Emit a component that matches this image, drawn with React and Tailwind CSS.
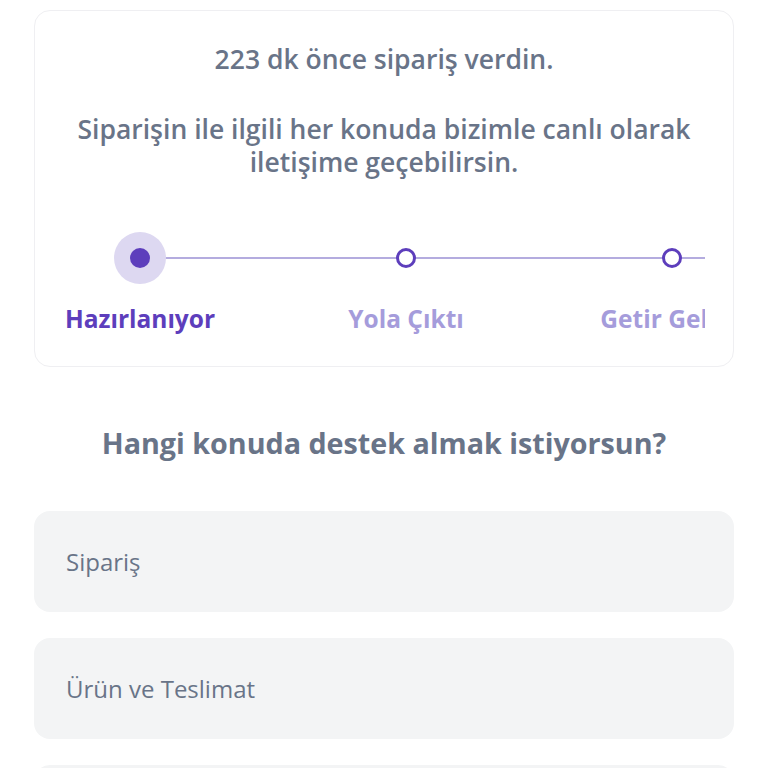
import React from "react";

const steps = [
  { label: "Hazırlanıyor", active: true },
  { label: "Yola Çıktı", active: false },
  { label: "Getir Gelsin", active: false },
];

export default function App() {
  return (
    <div
      className="w-[768px] h-[768px] overflow-hidden bg-white px-[34px] pt-[10px]"
      style={{ fontFamily: '"Open Sans", "Noto Sans", sans-serif' }}
    >
      <div className="rounded-[16px] border border-[#efeff2] bg-white pt-[32px] pb-[31px] text-[#697488]">
        <p className="text-center text-[26.5px] font-semibold leading-[33px]">223 dk önce sipariş verdin.</p>
        <p className="mt-[37px] text-center text-[26.5px] font-semibold leading-[33px] px-[30px]">
          Siparişin ile ilgili her konuda bizimle canlı olarak iletişime geçebilirsin.
        </p>
        <div className="relative ml-[30px] mr-[28px] mt-[53px] overflow-hidden">
          <div className="absolute left-[75px] right-0 top-[25px] h-[2px] bg-[#b4acdf]" />
          <div className="relative flex gap-[116px]">
            {steps.map((s) => (
              <div key={s.label} className="flex w-[150px] shrink-0 flex-col items-center">
                <div className="flex h-[52px] w-[52px] items-center justify-center">
                  {s.active ? (
                    <div className="flex h-[52px] w-[52px] items-center justify-center rounded-full bg-[#ddd8f1]">
                      <div className="h-[20px] w-[20px] rounded-full bg-[#5d3ebc]" />
                    </div>
                  ) : (
                    <div className="h-[20px] w-[20px] rounded-full border-[3.5px] border-[#5d3ebc] bg-white" />
                  )}
                </div>
                <div
                  className={
                    "mt-[19px] whitespace-nowrap text-[24.5px] font-bold leading-[32px] " +
                    (s.active ? "text-[#5d3ebc]" : "text-[#a59cdb]")
                  }
                >
                  {s.label}
                </div>
              </div>
            ))}
          </div>
        </div>
      </div>

      <h2 className="mt-[57px] text-center text-[28.7px] font-bold leading-[38px] text-[#697488]">
        Hangi konuda destek almak istiyorsun?
      </h2>

      <div className="mt-[49px] flex flex-col gap-[26px]">
        {["Sipariş", "Ürün ve Teslimat", "Ödeme"].map((t) => (
          <div
            key={t}
            className="flex h-[101px] items-center rounded-[16px] bg-[#f3f4f5] px-[32px] text-[24px] text-[#697488]"
          >
            {t}
          </div>
        ))}
      </div>
    </div>
  );
}
